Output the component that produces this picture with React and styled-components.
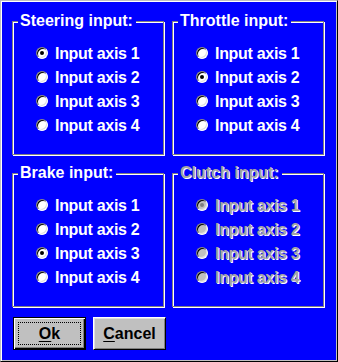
import React, { useState } from 'react';
import styled, { createGlobalStyle } from 'styled-components';

const GlobalStyle = createGlobalStyle`
    html, body {
        margin: 0;
        padding: 0;
        background: #0000ff;
    }
    * {
        box-sizing: border-box;
    }
`;

const Dialog = styled.div`
    width: 338px;
    height: 362px;
    background: #0000ff;
    border: 1px solid;
    border-color: #c0c0c0 #000 #000 #c0c0c0;
    box-shadow: inset 1px 1px #fff, inset -1px -1px #c0c0c0;
    padding: 20px 11px 0 11px;
    font-family: "Liberation Sans", Arial, sans-serif;
    font-weight: bold;
    font-size: 16px;
    color: #fff;
    display: flex;
    flex-direction: column;
`;

const Grid = styled.div`
    display: grid;
    grid-template-columns: 152px 152px;
    grid-template-rows: 134px 134px;
    column-gap: 8px;
    row-gap: 18px;
`;

const Group = styled.div`
    border: 1px solid #808080;
    box-shadow: inset 1px 1px #fff, 1px 1px #fff;
    padding: 0 0 0 23px;
    display: flex;
    flex-direction: column;
`;

const Title = styled.div`
    width: fit-content;
    margin: -10px 0 12px -18px;
    padding: 0 3px 0 2px;
    line-height: 18px;
    background: #0000ff;
    color: ${(p) => (p.$disabled ? '#a4a4a4' : '#fff')};
    text-shadow: ${(p) => (p.$disabled ? '1px 1px 0 #fff' : 'none')};
    white-space: nowrap;
`;

const Row = styled.label`
    display: flex;
    align-items: center;
    gap: 7px;
    height: 24px;
    line-height: 24px;
    letter-spacing: -0.3px;
    color: ${(p) => (p.$disabled ? '#a4a4a4' : '#fff')};
    text-shadow: ${(p) => (p.$disabled ? '1px 1px 0 #fff' : 'none')};
    cursor: ${(p) => (p.$disabled ? 'default' : 'pointer')};
    white-space: nowrap;
`;

const Radio = styled.span`
    position: relative;
    flex: none;
    width: 12px;
    height: 12px;
    margin-top: -2px;
    border-radius: 50%;
    border: 1px solid;
    border-color: #808080 #fff #fff #808080;
    box-shadow: inset 1px 1px #000, inset -1px -1px #dfdfdf;
    background: ${(p) => (p.$disabled ? '#c0c0c0' : '#fff')};

    &::after {
        content: '';
        display: ${(p) => (p.$checked ? 'block' : 'none')};
        position: absolute;
        left: 3px;
        top: 3px;
        width: 4px;
        height: 4px;
        border-radius: 50%;
        background: ${(p) => (p.$disabled ? '#808080' : '#000')};
    }
`;

const ButtonRow = styled.div`
    display: flex;
    gap: 7px;
    margin-top: 10px;
    padding-left: 1px;
`;

const Button = styled.button`
    position: relative;
    width: 73px;
    height: 33px;
    padding: 0;
    background: #c0c0c0;
    color: #000;
    font-family: "Liberation Sans", Arial, sans-serif;
    font-weight: bold;
    font-size: 16px;
    border: 1px solid;
    border-color: ${(p) => (p.$default ? '#000' : '#fff #000 #000 #fff')};
    box-shadow: ${(p) =>
        p.$default
            ? 'inset 1px 1px #fff, inset -1px -1px #000, inset -2px -2px #808080'
            : 'inset 1px 1px #dfdfdf, inset -1px -1px #808080'};
    cursor: pointer;

    u {
        text-decoration-thickness: 1px;
        text-underline-offset: 2px;
    }
`;

const FocusRing = styled.span`
    position: absolute;
    left: 4px;
    top: 4px;
    right: 4px;
    bottom: 4px;
    border: 1px dotted #000;
    pointer-events: none;
`;

const groups = [
    { name: 'Steering input:', selected: 0 },
    { name: 'Throttle input:', selected: 1 },
    { name: 'Brake input:', selected: 2 },
    { name: 'Clutch input:', selected: 0, disabled: true },
];

const InputGroup = ({ name, initial, disabled }) => {
    const [selected, setSelected] = useState(initial);

    return (
        <Group>
            <Title $disabled={disabled}>{name}</Title>
            {[1, 2, 3, 4].map((n, i) => (
                <Row
                    key={n}
                    $disabled={disabled}
                    onClick={() => !disabled && setSelected(i)}
                >
                    <Radio $checked={selected === i} $disabled={disabled} />
                    Input axis {n}
                </Row>
            ))}
        </Group>
    );
};

const App = () => {
    return (
        <>
            <GlobalStyle />
            <Dialog>
                <Grid>
                    {groups.map((g) => (
                        <InputGroup
                            key={g.name}
                            name={g.name}
                            initial={g.selected}
                            disabled={g.disabled}
                        />
                    ))}
                </Grid>
                <ButtonRow>
                    <Button $default>
                        <u>O</u>k
                        <FocusRing />
                    </Button>
                    <Button>
                        <u>C</u>ancel
                    </Button>
                </ButtonRow>
            </Dialog>
        </>
    );
};

export default App;
